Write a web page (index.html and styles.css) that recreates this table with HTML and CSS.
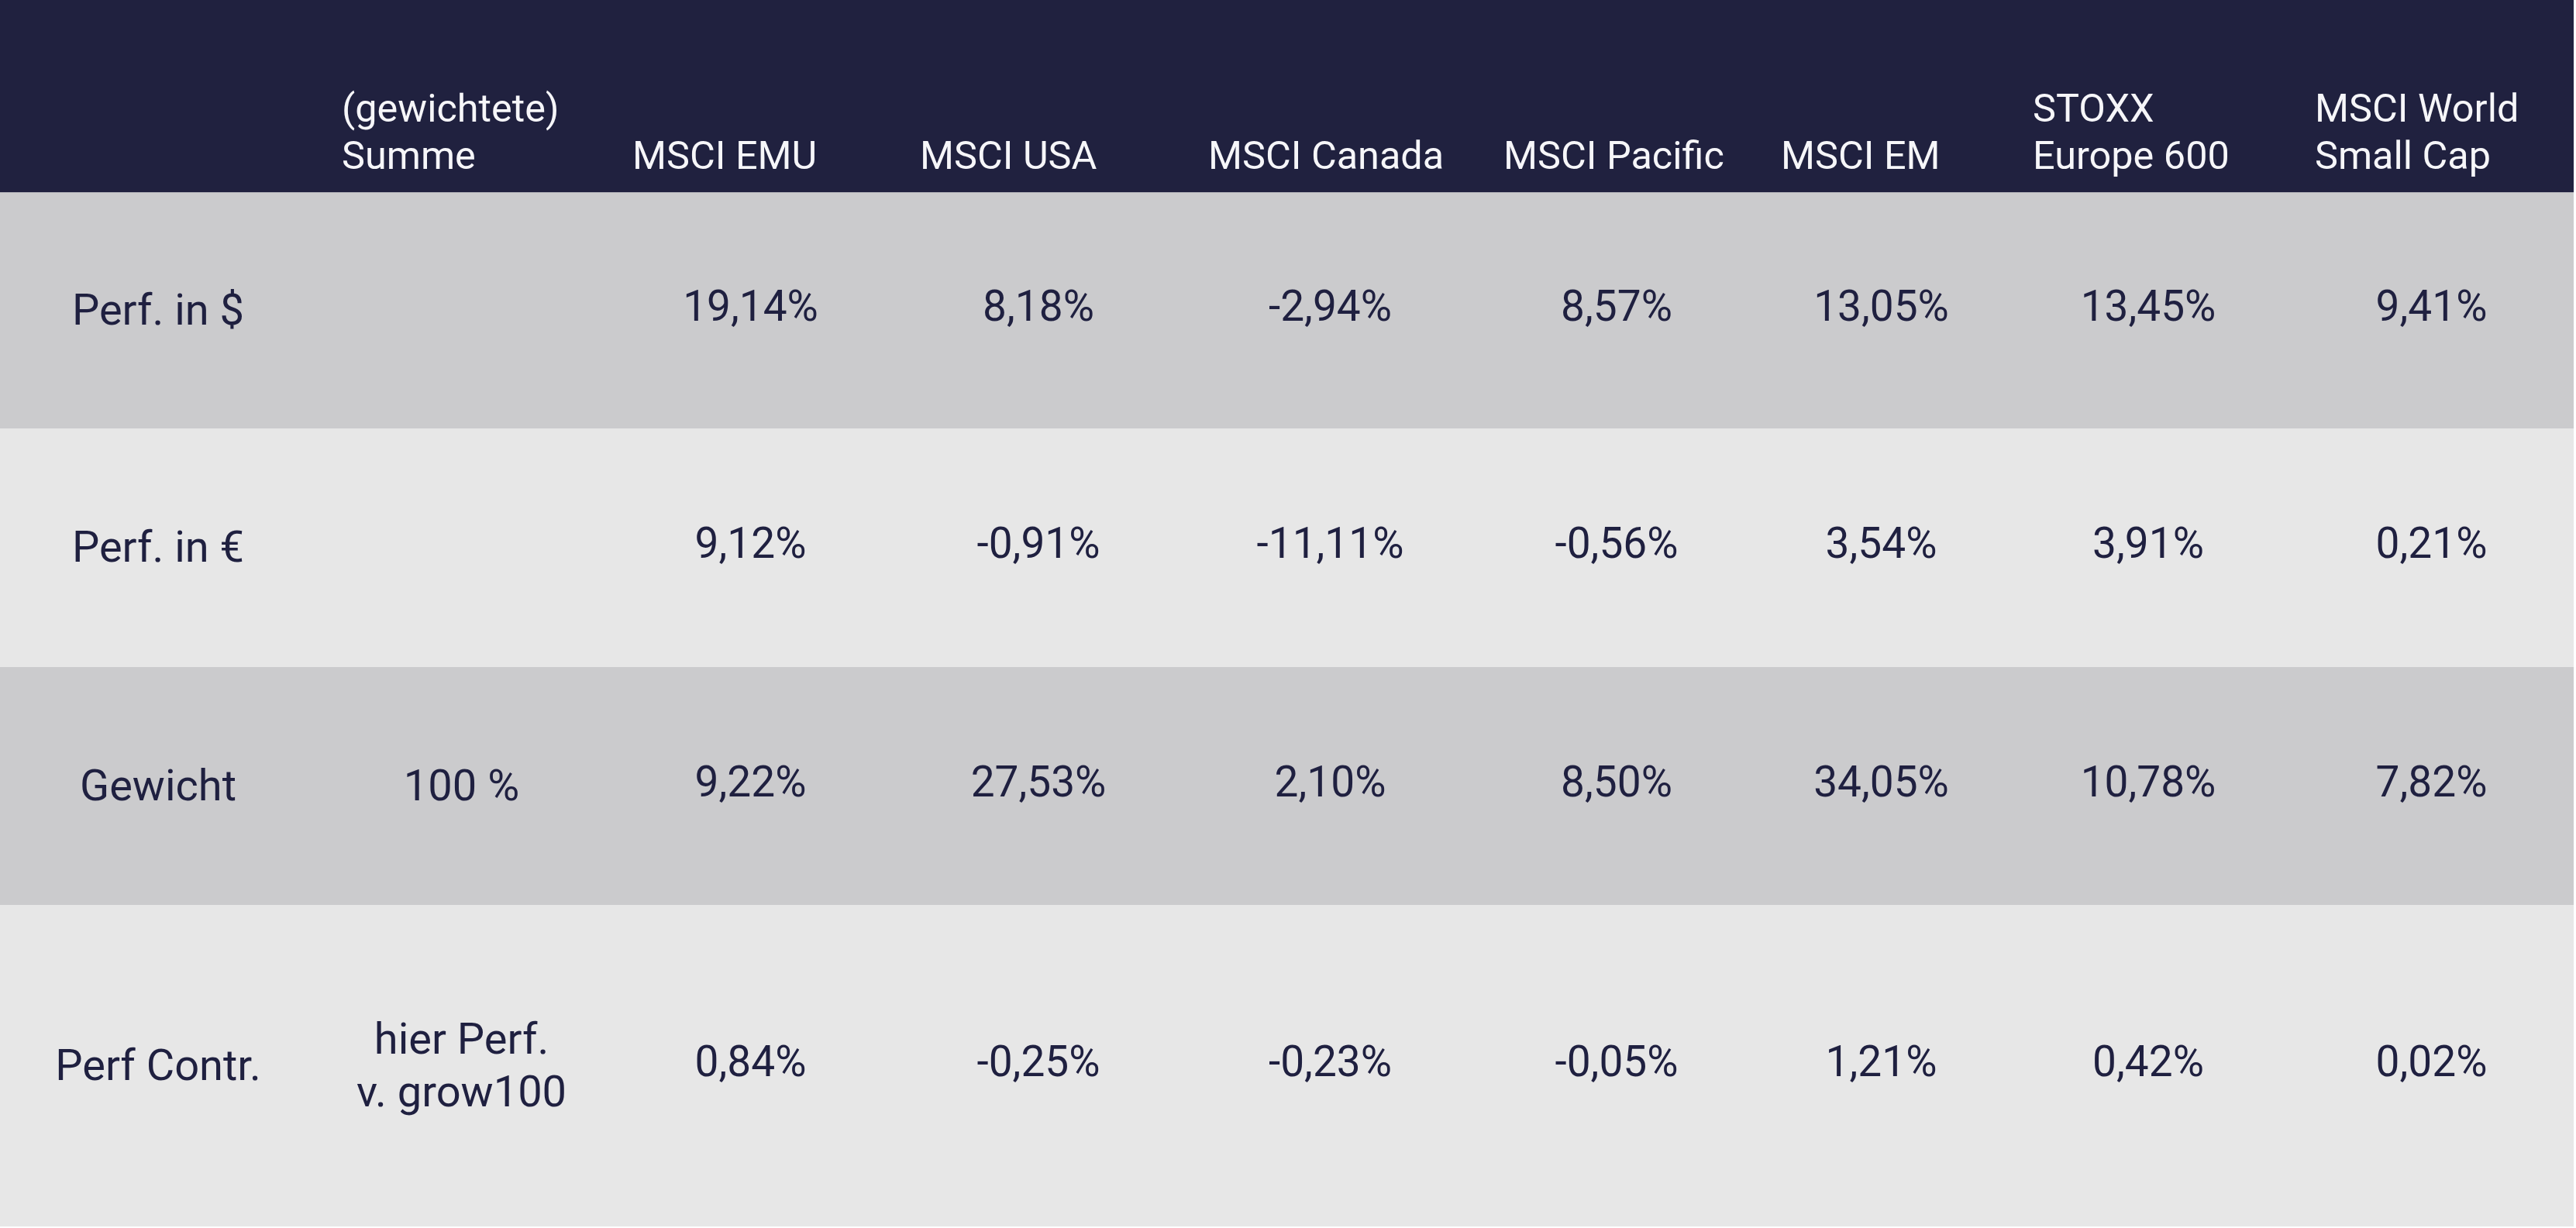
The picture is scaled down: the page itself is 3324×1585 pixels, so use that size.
FILE: index.html
```html
<!DOCTYPE html>
<html lang="de">
<head>
<meta charset="utf-8">
<title>Performance</title>
<link rel="stylesheet" href="styles.css">
</head>
<body>
<div class="table">
  <div class="row head">
    <div class="cell"></div>
    <div class="cell">(gewichtete)<br>Summe</div>
    <div class="cell">MSCI EMU</div>
    <div class="cell">MSCI USA</div>
    <div class="cell">MSCI Canada</div>
    <div class="cell">MSCI Pacific</div>
    <div class="cell">MSCI EM</div>
    <div class="cell">STOXX<br>Europe 600</div>
    <div class="cell">MSCI World<br>Small Cap</div>
  </div>
  <div class="row dark r1">
    <div class="cell label">Perf. in $</div>
    <div class="cell label"></div>
    <div class="cell val">19,14%</div>
    <div class="cell val">8,18%</div>
    <div class="cell val">-2,94%</div>
    <div class="cell val">8,57%</div>
    <div class="cell val">13,05%</div>
    <div class="cell val">13,45%</div>
    <div class="cell val">9,41%</div>
  </div>
  <div class="row light r2">
    <div class="cell label">Perf. in €</div>
    <div class="cell label"></div>
    <div class="cell val">9,12%</div>
    <div class="cell val">-0,91%</div>
    <div class="cell val">-11,11%</div>
    <div class="cell val">-0,56%</div>
    <div class="cell val">3,54%</div>
    <div class="cell val">3,91%</div>
    <div class="cell val">0,21%</div>
  </div>
  <div class="row dark r3">
    <div class="cell label">Gewicht</div>
    <div class="cell label">100 %</div>
    <div class="cell val">9,22%</div>
    <div class="cell val">27,53%</div>
    <div class="cell val">2,10%</div>
    <div class="cell val">8,50%</div>
    <div class="cell val">34,05%</div>
    <div class="cell val">10,78%</div>
    <div class="cell val">7,82%</div>
  </div>
  <div class="row light r4">
    <div class="cell label">Perf Contr.</div>
    <div class="cell label">hier Perf.<br>v. grow100</div>
    <div class="cell val">0,84%</div>
    <div class="cell val">-0,25%</div>
    <div class="cell val">-0,23%</div>
    <div class="cell val">-0,05%</div>
    <div class="cell val">1,21%</div>
    <div class="cell val">0,42%</div>
    <div class="cell val">0,02%</div>
  </div>
</div>
</body>
</html>
```
FILE: styles.css
```css
html, body {
  margin: 0;
  padding: 0;
  background: #ffffff;
}

body {
  font-family: Roboto, "Noto Sans", "Liberation Sans", sans-serif;
  color: #1f2040;
}

.table {
  width: 3321px;
  display: flex;
  flex-direction: column;
}

.row {
  display: grid;
  grid-template-columns: 408px 375px 371px 372px 381px 358px 325px 364px 367px;
}

.head {
  height: 248px;
  background: #20213f;
  color: #f6f6f9;
  font-size: 50.4px;
  line-height: 61px;
}

.head .cell {
  display: flex;
  align-items: flex-end;
  padding: 0 0 17px 33px;
}

.dark { background: #cbcbcd; }
.light { background: #e7e7e7; }

.r1 { height: 305px; box-shadow: inset 0 1px 0 #b4b4ba; }
.r2 { height: 308px; }
.r3 { height: 307px; }
.r4 { height: 415px; }

.row:not(.head) .cell {
  display: flex;
  align-items: center;
  justify-content: center;
  text-align: center;
  line-height: 1.2;
}

.label {
  font-size: 56px;
}

.row:not(.head) .val {
  font-size: 55px;
  padding-bottom: 12px;
}
```
